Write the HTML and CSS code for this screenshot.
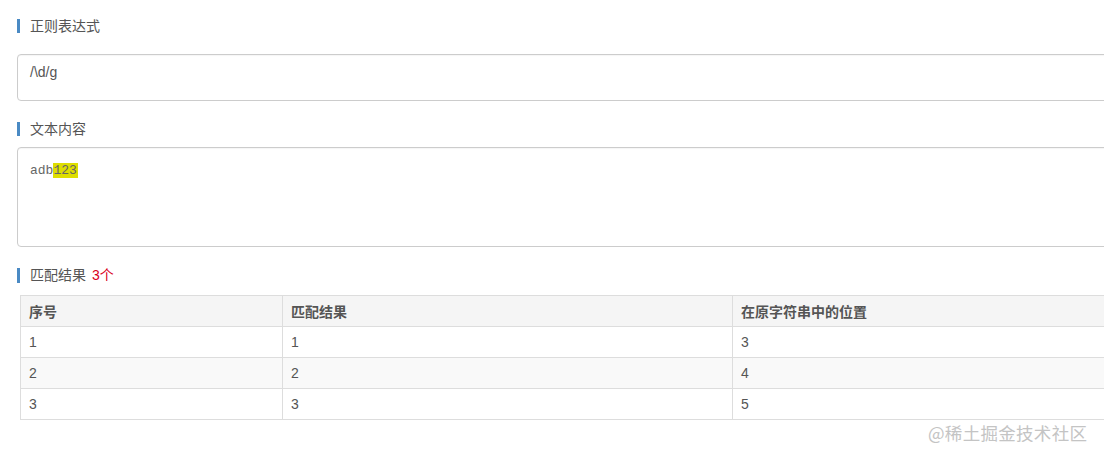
FILE: index.html
```html
<!DOCTYPE html>
<html lang="zh-CN">
<head>
<meta charset="utf-8">
<title>正则表达式测试</title>
<link rel="stylesheet" href="styles.css">
</head>
<body>
<div class="page">
  <div class="title t1">正则表达式</div>
  <div class="box box-regex">/\d/g</div>
  <div class="title t2">文本内容</div>
  <div class="box box-text"><span class="mono">adb<mark class="hl">123</mark></span></div>
  <div class="title t3">匹配结果 <span class="count">3个</span></div>
  <table class="result">
    <colgroup><col class="c1"><col class="c2"><col class="c3"></colgroup>
    <thead>
      <tr><th>序号</th><th>匹配结果</th><th>在原字符串中的位置</th></tr>
    </thead>
    <tbody>
      <tr><td>1</td><td>1</td><td>3</td></tr>
      <tr class="odd"><td>2</td><td>2</td><td>4</td></tr>
      <tr><td>3</td><td>3</td><td>5</td></tr>
    </tbody>
  </table>
</div>
<div class="watermark">@稀土掘金技术社区</div>
</body>
</html>
```

FILE: styles.css
```css
html, body {
  margin: 0;
  padding: 0;
  overflow: hidden;
  background: #fff;
}
body {
  width: 1104px;
  height: 458px;
  position: relative;
  font-family: "Liberation Sans", Arial, "Noto Sans CJK SC", sans-serif;
  font-size: 14px;
  color: #555;
}
.page {
  width: 1300px;
  padding: 19px 0 0 17px;
  box-sizing: border-box;
}
.title {
  height: 14px;
  line-height: 14px;
  border-left: 3px solid #4a8ac4;
  padding-left: 10px;
  color: #555;
  font-size: 14px;
}
.t1 { margin-bottom: 21px; }
.t2 { margin-top: 21px; margin-bottom: 11px; }
.t3 { margin-top: 21px; margin-bottom: 12px; height: 15px; line-height: 15px; }
.count { color: #d9001b; margin-left: 2px; }
.box {
  border: 1px solid #ccc;
  border-radius: 4px;
  box-sizing: border-box;
  padding: 9px 12px;
  color: #555;
  box-shadow: inset 0 1px 1px rgba(0,0,0,0.04);
}
.box-regex {
  height: 47px;
  line-height: 16px;
}
.box-text {
  height: 100px;
  padding-top: 13px;
}
.mono {
  font-family: "Liberation Mono", "Courier New", monospace;
  font-size: 13px;
  line-height: 15px;
  color: #666;
}
.hl {
  background: #dede00;
  color: #666;
  padding: 0 1px 0 0;
}
.result {
  margin-left: 3px;
  border-collapse: collapse;
  width: 1250px;
  table-layout: fixed;
  font-size: 14px;
}
.c1 { width: 262px; }
.c2 { width: 450px; }
.result th, .result td {
  border: 1px solid #ddd;
  height: 31px;
  padding: 0 8px;
  text-align: left;
  box-sizing: border-box;
}
.result th {
  background: #f5f5f5;
  font-weight: bold;
  color: #555;
}
.result td { color: #555; }
.result tr.odd td { background: #f9f9f9; }
.watermark {
  position: absolute;
  left: 928px;
  top: 422px;
  font-size: 17.5px;
  color: #c4c4c4;
  letter-spacing: 0.3px;
  font-family: "Noto Sans CJK SC", sans-serif;
  line-height: 22px;
}
```
